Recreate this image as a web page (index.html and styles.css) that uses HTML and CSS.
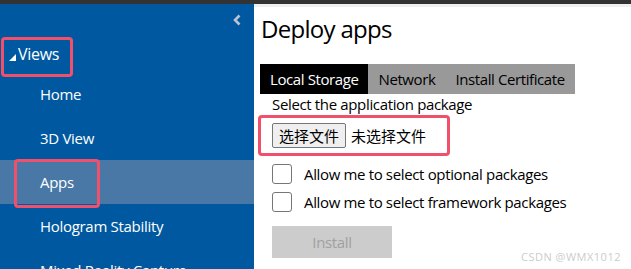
FILE: index.html
```html
<!DOCTYPE html>
<html lang="en">
<head>
<meta charset="utf-8">
<title>Deploy apps</title>
<link rel="stylesheet" href="styles.css">
</head>
<body>
<div class="topbar"></div>
<div class="layout">
  <nav class="sidebar">
    <div class="collapse-row">
      <svg class="chevron" width="10" height="12" viewBox="0 0 10 12"><path d="M7.5 1.5 L3 6 L7.5 10.5" fill="none" stroke="#b9c3d3" stroke-width="2.6"/></svg>
    </div>
    <div class="group">
      <span class="tri"></span><span>Views</span>
      <span class="mark mark-views"></span>
    </div>
    <ul class="nav-list">
      <li class="nav-item">Home</li>
      <li class="nav-item">3D View</li>
      <li class="nav-item active">Apps<span class="mark mark-apps"></span></li>
      <li class="nav-item">Hologram Stability</li>
      <li class="nav-item">Mixed Reality Capture</li>
    </ul>
  </nav>
  <main class="main">
    <h1 class="title">Deploy apps</h1>
    <div class="tabs">
      <div class="tab selected">Local Storage</div>
      <div class="tab">Network</div>
      <div class="tab">Install Certificate</div>
    </div>
    <div class="panel">
      <div class="label">Select the application package</div>
      <div class="file-row">
        <span class="file-btn">选择文件</span><span class="file-name">未选择文件</span>
        <span class="mark mark-file"></span>
      </div>
      <label class="check"><span class="box"></span>Allow me to select optional packages</label>
      <label class="check"><span class="box"></span>Allow me to select framework packages</label>
      <div class="install">Install</div>
    </div>
    <div class="watermark">CSDN @WMX1012</div>
  </main>
</div>
</body>
</html>
```

FILE: styles.css
```css
html, body {
  margin: 0;
  padding: 0;
  height: 100%;
  overflow: hidden;
}
body {
  font-family: "Open Sans", "Noto Sans CJK SC", sans-serif;
  background: #ffffff;
}
.topbar {
  height: 4px;
  background: #333333;
}
.layout {
  display: flex;
  height: 265px;
  overflow: hidden;
}
.sidebar {
  width: 254px;
  flex: none;
  background: #0059a0;
  color: #ffffff;
  position: relative;
  overflow: hidden;
}
.collapse-row {
  height: 33px;
  display: flex;
  justify-content: flex-end;
  align-items: flex-start;
  padding-right: 12px;
}
.chevron {
  margin-top: 10px;
}
.group {
  position: relative;
  height: 35px;
  line-height: 35px;
  font-size: 16px;
  letter-spacing: -0.3px;
  padding-left: 9px;
  display: flex;
  align-items: center;
}
.tri {
  width: 0;
  height: 0;
  border-left: 7px solid transparent;
  border-bottom: 7px solid #ffffff;
  margin-top: 6px;
  margin-right: 2px;
}
.nav-list {
  list-style: none;
  margin: 0;
  padding: 0;
}
.nav-item {
  position: relative;
  height: 44px;
  line-height: 44px;
  font-size: 15px;
  letter-spacing: -0.3px;
  padding-left: 40px;
}
.nav-item.active {
  background: #4a78a6;
}
.mark {
  position: absolute;
  border: 3px solid #f1506a;
  border-radius: 4px;
  box-sizing: border-box;
}
.mark-views {
  left: 1px;
  top: 0;
  width: 72px;
  height: 40px;
}
.mark-apps {
  left: 14px;
  top: -1px;
  width: 86px;
  height: 49px;
}
.main {
  flex: 1;
  position: relative;
  border-top: 3px solid #f0f0f0;
  padding-left: 6px;
  color: #000000;
}
.title {
  margin: 0;
  font-weight: normal;
  font-size: 24px;
  letter-spacing: -0.7px;
  line-height: 32px;
  height: 57px;
  padding-left: 1px;
  padding-top: 6px;
  box-sizing: border-box;
}
.tabs {
  display: inline-flex;
  background: #999999;
  height: 30px;
  line-height: 30px;
  font-size: 15px;
  letter-spacing: -0.4px;
}
.tab {
  padding: 0 10px;
  color: #000000;
}
.tab.selected {
  background: #000000;
  color: #ffffff;
}
.panel {
  padding-left: 12px;
  font-size: 15px;
  letter-spacing: -0.35px;
}
.label {
  line-height: 20px;
  height: 22px;
}
.file-row {
  position: relative;
  display: flex;
  align-items: center;
  height: 40px;
  font-family: "Noto Sans CJK SC", sans-serif;
  font-size: 15px;
  letter-spacing: 0;
}
.file-btn {
  height: 25px;
  line-height: 23px;
  box-sizing: border-box;
  padding: 0 6px;
  border: 1px solid #767676;
  border-radius: 2px;
  background: #efefef;
  margin-top: -2px;
}
.file-name {
  margin-left: 5px;
  margin-top: -2px;
}
.mark-file {
  left: -14px;
  top: -1px;
  width: 192px;
  height: 41px;
}
.check {
  display: flex;
  align-items: center;
  height: 28px;
  font-size: 15px;
}
.check:first-of-type {
  margin-top: 4px;
}
.box {
  width: 20px;
  height: 20px;
  box-sizing: border-box;
  border: 1px solid #767676;
  border-radius: 3px;
  margin-right: 12px;
  background: #ffffff;
}
.install {
  margin-top: 10px;
  width: 120px;
  height: 32px;
  line-height: 32px;
  background: #cccccc;
  color: #a0a0a0;
  text-align: center;
  font-size: 15px;
}
.watermark {
  position: absolute;
  right: 10px;
  bottom: 5px;
  font-size: 11px;
  color: #cccccc;
  letter-spacing: 0.5px;
}
```
